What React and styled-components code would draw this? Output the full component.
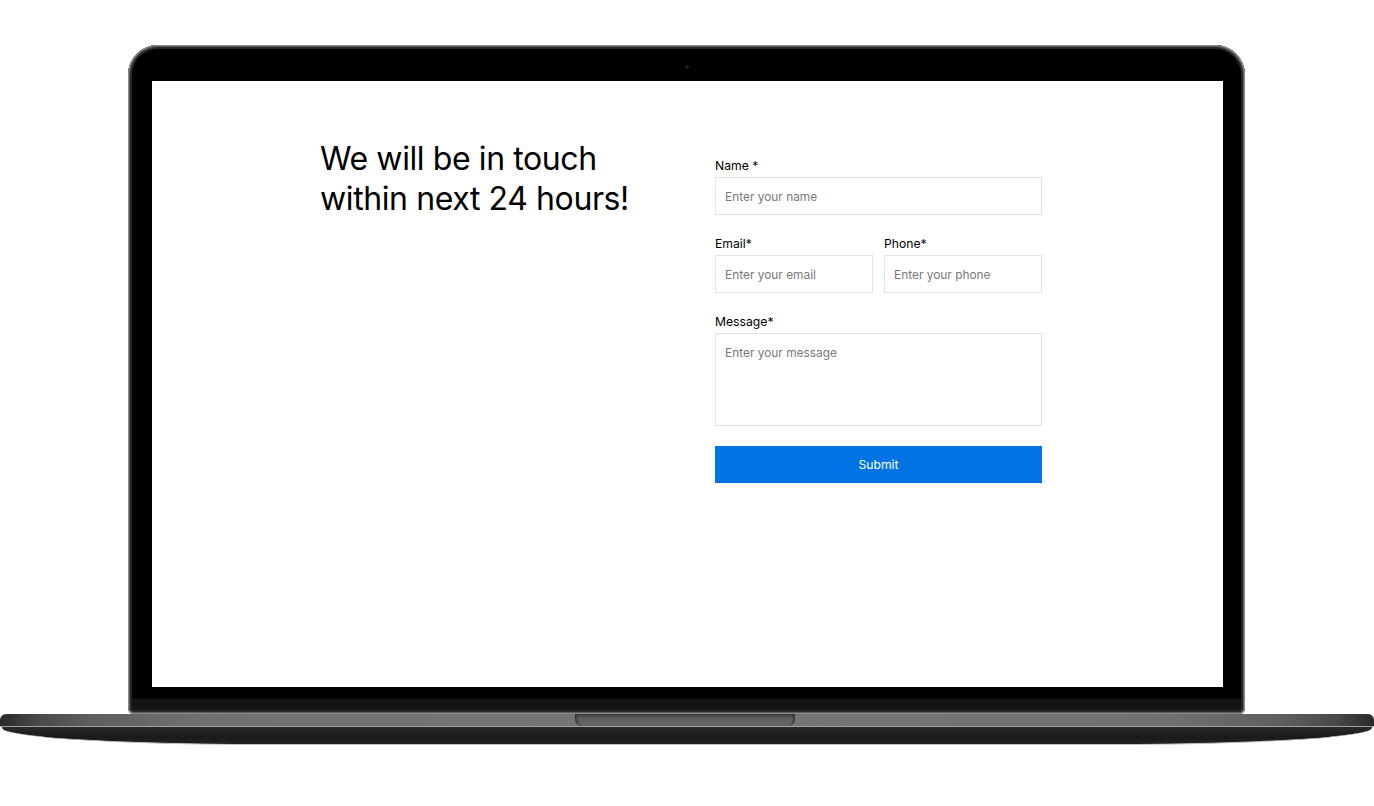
import React from 'react'
import styled, { createGlobalStyle } from 'styled-components'

const GlobalStyle = createGlobalStyle`
  html, body {
    margin: 0;
    padding: 0;
    background: #fff;
  }
  * {
    box-sizing: border-box;
  }
`

const Page = styled.div`
  width: 1374px;
  height: 806px;
  padding-top: 45px;
  display: flex;
  flex-direction: column;
  align-items: flex-start;
  overflow: hidden;
`

const Lid = styled.div`
  position: relative;
  width: 1117px;
  height: 669px;
  margin-left: 128px;
  padding: 36px 22px 27px 24px;
  border-radius: 30px 30px 6px 6px;
  background: linear-gradient(to bottom, #000 0, #000 653px, #131313 654px, #151515 100%);
  box-shadow: inset 0 0 0 1px #8c8c8c, inset 0 0 0 2px #5c5c5c, inset 0 0 0 4px #262626;
`

const Camera = styled.div`
  position: absolute;
  top: 20px;
  left: 557px;
  width: 4px;
  height: 4px;
  border-radius: 50%;
  background: #1c1e2a;
`

const Screen = styled.div`
  width: 100%;
  height: 100%;
  background: #fff;
  padding: 76px 0 0 168px;
  display: flex;
  align-items: flex-start;
  font-family: Inter, 'Noto Sans', sans-serif;
  color: #000;
`

const Heading = styled.h1`
  width: 395px;
  margin: 0;
  margin-top: -18px;
  font-size: 32px;
  line-height: 40px;
  font-weight: 400;
  letter-spacing: -0.4px;
`

const Form = styled.form`
  width: 327px;
  display: flex;
  flex-direction: column;
  gap: 20px;
`

const Row = styled.div`
  display: flex;
  gap: 11px;
`

const Field = styled.label`
  flex: 1;
  display: flex;
  flex-direction: column;
  gap: 3px;
`

const LabelText = styled.span`
  padding-top: 1px;
  font-size: 12.2px;
  line-height: 16px;
  color: #000;
`

const inputStyles = `
  width: 100%;
  border: 1px solid #e2e2e2;
  border-radius: 0;
  padding: 0 9px;
  font-family: Inter, 'Noto Sans', sans-serif;
  font-size: 11.9px;
  color: #000;
  background: #fff;
  outline: none;
  &::placeholder {
    color: #7a7a7a;
  }
`

const Input = styled.input`
  ${inputStyles}
  height: 38px;
`

const TextArea = styled.textarea`
  ${inputStyles}
  height: 93px;
  padding-top: 11px;
  resize: none;
  display: block;
`

const SubmitButton = styled.button`
  height: 37px;
  border: none;
  background: #0074e5;
  color: #fff;
  font-family: Inter, 'Noto Sans', sans-serif;
  font-size: 12.2px;
  cursor: pointer;
`

const Base = styled.div`
  position: relative;
  width: 1374px;
  height: 31px;
  display: flex;
  flex-direction: column;
`

const BaseTop = styled.div`
  height: 13px;
  border-radius: 6px 6px 0 0;
  background: linear-gradient(
    to right,
    #2a2a2a 0,
    #4a4a4a 40px,
    #5e5e5e 90px,
    #707070 200px,
    #777 687px,
    #707070 1174px,
    #5e5e5e 1284px,
    #4a4a4a 1334px,
    #2a2a2a 100%
  );
  border-bottom: 1px solid #a0a0a0;
`

const BaseBottom = styled.div`
  flex: 1;
  margin: 0 2px;
  background: linear-gradient(to bottom, #2a2a2a 0, #1a1a1a 60%, #222 100%);
  border-radius: 0 0 260px 260px / 0 0 17px 17px;
  border-bottom: 1px solid #c4c4c4;
`

const Notch = styled.div`
  position: absolute;
  top: 0;
  left: 575px;
  width: 220px;
  height: 12px;
  border-radius: 0 0 7px 7px;
  background: linear-gradient(to bottom, #3a3a3a 0, #5e5e5e 35%, #6a6a6a 100%);
  box-shadow: inset 3px 0 3px -2px #222, inset -3px 0 3px -2px #222;
`

export default function App() {
  return (
    <>
      <GlobalStyle />
      <Page>
        <Lid>
          <Camera />
          <Screen>
            <Heading>
              We will be in touch
              <br />
              within next 24 hours!
            </Heading>
            <Form onSubmit={e => e.preventDefault()}>
              <Field>
                <LabelText>Name *</LabelText>
                <Input type="text" placeholder="Enter your name" />
              </Field>
              <Row>
                <Field>
                  <LabelText>Email*</LabelText>
                  <Input type="email" placeholder="Enter your email" />
                </Field>
                <Field>
                  <LabelText>Phone*</LabelText>
                  <Input type="tel" placeholder="Enter your phone" />
                </Field>
              </Row>
              <Field>
                <LabelText>Message*</LabelText>
                <TextArea placeholder="Enter your message" />
              </Field>
              <SubmitButton type="submit">Submit</SubmitButton>
            </Form>
          </Screen>
        </Lid>
        <Base>
          <BaseTop />
          <BaseBottom />
          <Notch />
        </Base>
      </Page>
    </>
  )
}
